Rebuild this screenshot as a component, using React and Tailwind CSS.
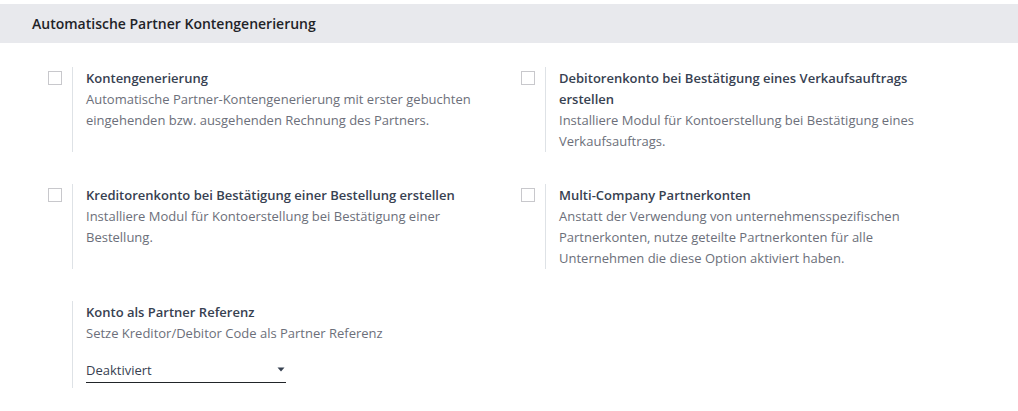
const font = { fontFamily: '"Open Sans", "Noto Sans", sans-serif' };

function Checkbox() {
  return <span className="block w-[14px] h-[14px] border border-[#c8c8cc] bg-white" />;
}

function Setting({ title, children, withCheckbox = true, extra = null }) {
  return (
    <div className="flex">
      <div className="w-[40px] shrink-0 pl-4 pt-1">{withCheckbox && <Checkbox />}</div>
      <div className="border-l border-[#dee2e6] pl-[13px] pr-4">
        <div className="max-w-[400px] pt-px text-[13px] leading-[21px]">
          <div className="font-semibold text-[#374151]">{title}</div>
          <div className="text-[#6c6f7a]">{children}</div>
          {extra}
        </div>
      </div>
    </div>
  );
}

function SelectField() {
  return (
    <div className="mt-[15px] mb-[5px] w-[200px] h-6 border-b border-[#212529] flex items-center justify-between text-[13px] text-[#374151]">
      <span>Deaktiviert</span>
      <svg width="8" height="5" viewBox="0 0 8 5" className="mr-[1px] mb-[3px]">
        <path d="M0.5 0.5 H7.5 L4 4.5 Z" fill="#374151" />
      </svg>
    </div>
  );
}

export default function App() {
  return (
    <div className="w-[1018px] min-h-[411px] bg-white pt-1" style={font}>
      <div className="h-[39px] bg-[#e8e9ed] flex items-center px-8 text-[14px] font-semibold text-[#1f2328]">
        Automatische Partner Kontengenerierung
      </div>
      <div className="mt-6 px-8 grid grid-cols-[473px_473px] gap-y-8">
        <Setting title="Kontengenerierung">
          Automatische Partner-Kontengenerierung mit erster gebuchten eingehenden bzw. ausgehenden Rechnung des Partners.
        </Setting>
        <Setting title="Debitorenkonto bei Bestätigung eines Verkaufsauftrags erstellen">
          Installiere Modul für Kontoerstellung bei Bestätigung eines Verkaufsauftrags.
        </Setting>
        <Setting title="Kreditorenkonto bei Bestätigung einer Bestellung erstellen">
          Installiere Modul für Kontoerstellung bei Bestätigung einer Bestellung.
        </Setting>
        <Setting title="Multi-Company Partnerkonten">
          Anstatt der Verwendung von unternehmensspezifischen Partnerkonten, nutze geteilte Partnerkonten für alle Unternehmen die diese Option aktiviert haben.
        </Setting>
        <Setting title="Konto als Partner Referenz" withCheckbox={false} extra={<SelectField />}>
          Setze Kreditor/Debitor Code als Partner Referenz
        </Setting>
      </div>
    </div>
  );
}
